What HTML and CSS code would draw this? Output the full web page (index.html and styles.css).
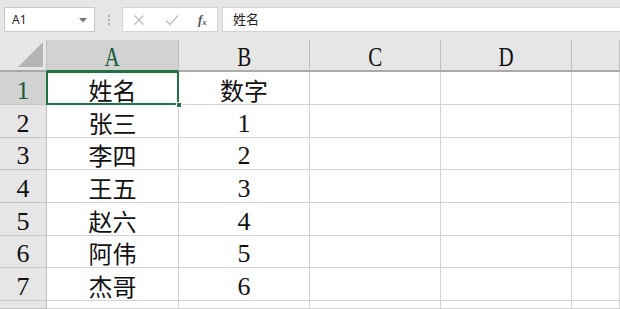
FILE: index.html
```html
<!DOCTYPE html>
<html>
<head>
    <meta charset="utf-8">
    <title>Sheet1</title>
    <link rel="stylesheet" href="styles.css">
</head>
<body>
    <div class="bar">
        <div class="namebox">
            <span>A1</span>
            <svg class="drop" width="8" height="5" viewBox="0 0 8 5"><path d="M0 0H8L4 4.5Z" fill="#777"/></svg>
        </div>
        <div class="dots"><i></i><i></i><i></i></div>
        <div class="btns">
            <svg width="12" height="12" viewBox="0 0 12 12"><path d="M1.5 1.5L10.5 10.5M10.5 1.5L1.5 10.5" stroke="#bdbdbd" stroke-width="1.3" fill="none"/></svg>
            <svg width="14" height="12" viewBox="0 0 14 12"><path d="M1 6.5L5 10.5L13 1.5" stroke="#bdbdbd" stroke-width="1.3" fill="none"/></svg>
            <span class="fx">f<sub>x</sub></span>
        </div>
        <div class="formula">姓名</div>
    </div>

    <div class="sheet">
        <div class="corner"><svg width="26" height="26" viewBox="0 0 26 26"><path d="M25 0V25H0Z" fill="#b5b5b5"/></svg></div>
        <div class="colh sel"><span>A</span></div>
        <div class="colh"><span>B</span></div>
        <div class="colh"><span>C</span></div>
        <div class="colh"><span>D</span></div>
        <div class="colh"></div>

        <div class="rowh sel">1</div>
        <div class="cell cur">姓名<span class="handle"></span></div>
        <div class="cell">数字</div>
        <div class="cell"></div><div class="cell"></div><div class="cell"></div>

        <div class="rowh">2</div>
        <div class="cell">张三</div><div class="cell num">1</div>
        <div class="cell"></div><div class="cell"></div><div class="cell"></div>

        <div class="rowh">3</div>
        <div class="cell">李四</div><div class="cell num">2</div>
        <div class="cell"></div><div class="cell"></div><div class="cell"></div>

        <div class="rowh">4</div>
        <div class="cell">王五</div><div class="cell num">3</div>
        <div class="cell"></div><div class="cell"></div><div class="cell"></div>

        <div class="rowh">5</div>
        <div class="cell">赵六</div><div class="cell num">4</div>
        <div class="cell"></div><div class="cell"></div><div class="cell"></div>

        <div class="rowh">6</div>
        <div class="cell">阿伟</div><div class="cell num">5</div>
        <div class="cell"></div><div class="cell"></div><div class="cell"></div>

        <div class="rowh">7</div>
        <div class="cell">杰哥</div><div class="cell num">6</div>
        <div class="cell"></div><div class="cell"></div><div class="cell"></div>

        <div class="rowh"></div>
        <div class="cell"></div><div class="cell"></div>
        <div class="cell"></div><div class="cell"></div><div class="cell"></div>
    </div>
</body>
</html>
```

FILE: styles.css
```css
*{
	margin: 0;
	padding: 0;
	box-sizing: border-box;
}
body{
	background-color: #ffffff;
	overflow: hidden;
	font-family: "Liberation Serif", "Noto Sans CJK SC", serif;
}
.bar{
	height: 40px;
	background-color: #e6e6e6;
	display: flex;
	align-items: flex-start;
	padding: 7px 0 0 4px;
}
.namebox{
	width: 91px;
	height: 25px;
	background-color: #fff;
	border: 1px solid #c8c8c8;
	display: flex;
	align-items: center;
	justify-content: space-between;
	padding: 0 7px 0 7px;
	font-family: "Noto Sans", "Noto Sans CJK SC", sans-serif;
	font-size: 12px;
	color: #222;
}
.drop{
	margin-top: 1px;
}
.dots{
	width: 27px;
	height: 25px;
	display: flex;
	flex-direction: column;
	align-items: center;
	justify-content: center;
	gap: 2px;
}
.dots i{
	width: 2px;
	height: 2px;
	background-color: #b0b0b0;
}
.btns{
	width: 96px;
	height: 25px;
	background-color: #fff;
	border: 1px solid #d4d4d4;
	display: flex;
	align-items: center;
	padding-left: 10px;
}
.btns svg:first-child{
	margin-right: 20px;
}
.btns svg:nth-child(2){
	margin-right: 19px;
}
.fx{
	font-family: "Liberation Serif", serif;
	font-style: italic;
	font-size: 13px;
	color: #555;
	font-weight: bold;
}
.fx sub{
	font-size: 9px;
	vertical-align: -1px;
}
.formula{
	flex: 1;
	height: 25px;
	margin-left: 4px;
	background-color: #fff;
	border: 1px solid #d4d4d4;
	border-right: 0;
	padding-left: 10px;
	font-family: "Noto Sans CJK SC", sans-serif;
	font-size: 13px;
	line-height: 22px;
	color: #222;
}
.sheet{
	display: grid;
	grid-template-columns: 47px 132px 131px 131px 131px minmax(0, 1fr);
	grid-template-rows: 32px 33px 33px 32px 33px 33px 32px 33px 8px;
	overflow: hidden;
}
.corner{
	background-color: #e6e6e6;
	border-right: 1px solid #bdbdbd;
	border-bottom: 2px solid #a9a9a9;
	display: flex;
	align-items: flex-end;
	justify-content: flex-end;
	padding: 0 2px 2px 0;
}
.colh{
	background-color: #e6e6e6;
	border-right: 1px solid #bdbdbd;
	border-bottom: 2px solid #a9a9a9;
	display: flex;
	align-items: flex-start;
	justify-content: center;
	padding-top: 3px;
	color: #111;
}
.colh span{
	display: block;
	font-size: 28px;
	line-height: 28px;
	transform: scaleX(0.75);
}
.colh.sel{
	background-color: #d2d2d2;
	border-bottom-color: #217346;
	color: #1d5b3a;
}
.rowh{
	background-color: #e6e6e6;
	border-right: 1px solid #bdbdbd;
	border-bottom: 1px solid #c4c4c4;
	display: flex;
	align-items: flex-end;
	justify-content: center;
	font-size: 26px;
	line-height: 1;
	color: #111;
}
.rowh.sel{
	background-color: #d2d2d2;
	color: #1d5b3a;
}
.cell{
	border-right: 1px solid #d4d4d4;
	border-bottom: 1px solid #d4d4d4;
	display: flex;
	align-items: flex-end;
	justify-content: center;
	font-family: "Noto Sans CJK SC", sans-serif;
	font-size: 24px;
	line-height: 1;
	padding-bottom: 2px;
	color: #111;
	position: relative;
}
.cell.num{
	font-family: "Liberation Serif", serif;
	font-size: 26px;
	padding-bottom: 0;
}
.cur::after{
	content: "";
	position: absolute;
	left: -1px;
	top: -1px;
	right: -1px;
	bottom: -1px;
	border: 2px solid #217346;
}
.handle{
	position: absolute;
	right: -4px;
	bottom: -4px;
	width: 6px;
	height: 6px;
	background-color: #217346;
	border: 1px solid #fff;
	z-index: 2;
}
```
